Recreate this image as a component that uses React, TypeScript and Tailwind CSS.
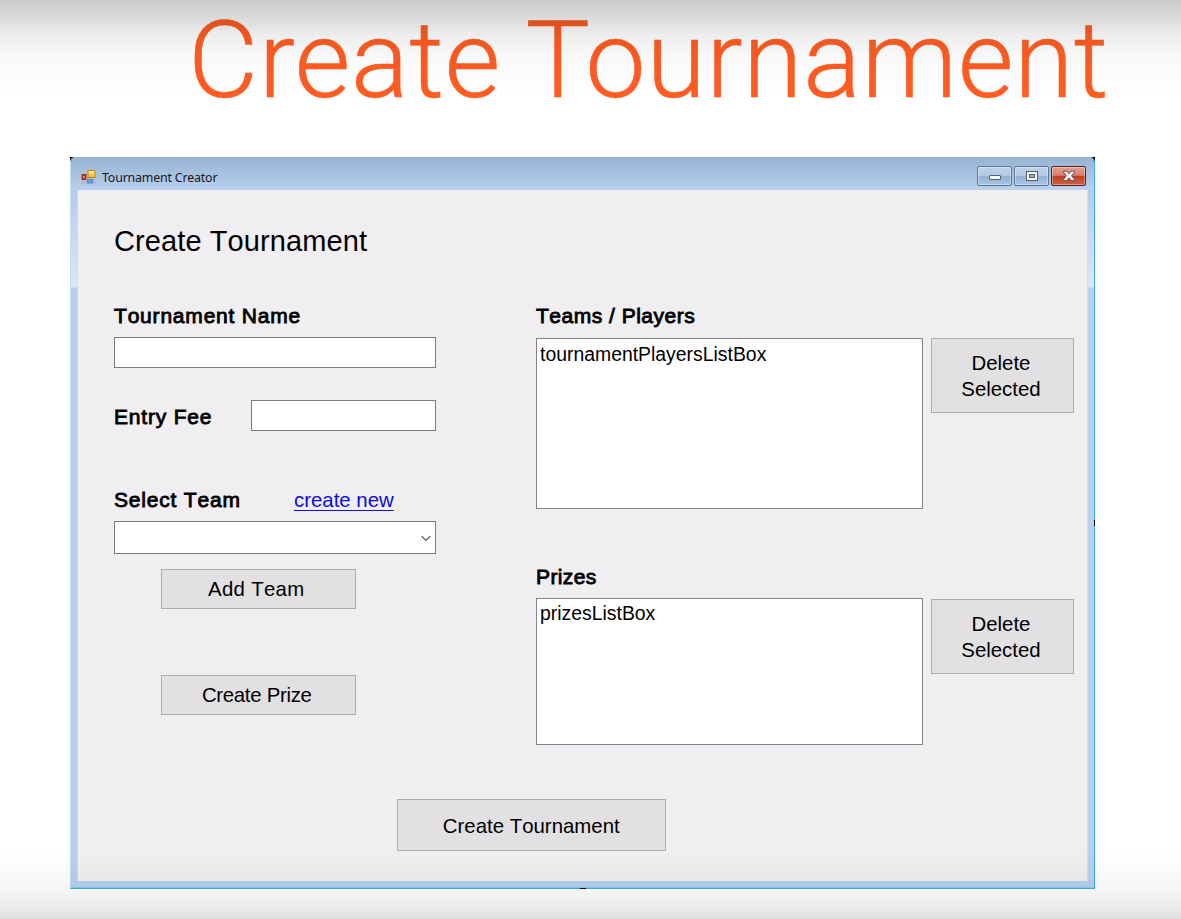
import type { ReactNode } from "react";

function FormIcon() {
  return (
    <svg width="16" height="16" viewBox="0 0 16 16">
      <defs>
        <linearGradient id="gold" x1="0" y1="0" x2="0" y2="1">
          <stop offset="0" stopColor="#fff0a0" />
          <stop offset="1" stopColor="#f0b010" />
        </linearGradient>
      </defs>
      <rect x="0" y="1" width="15" height="14" fill="#b4bfd0" />
      <rect x="1" y="5.5" width="4" height="5" fill="#b5331d" stroke="#8c2415" strokeWidth="0.8" />
      <rect x="2.3" y="7" width="1.2" height="2" fill="#ffb49c" />
      <rect x="7" y="1.5" width="7" height="7" fill="url(#gold)" stroke="#c08a12" />
      <rect x="6.5" y="10.5" width="5" height="3.5" fill="#6d9df0" stroke="#4b7ad0" strokeWidth="0.8" />
    </svg>
  );
}

const glass =
  "border-[#5d7592] bg-[linear-gradient(180deg,#bfd2ea_0%,#b2c9e5_48%,#94b1d4_52%,#a9c4e4_100%)]";
const red =
  "border-[#5b1f22] bg-[linear-gradient(180deg,#e3a293_0%,#d9806c_46%,#bd3f23_52%,#cf6045_100%)]";

function CaptionButton({ tone, label, children }: { tone: string; label: string; children: ReactNode }) {
  return (
    <button
      aria-label={label}
      className={`flex h-5 w-[35px] items-center justify-center rounded-[2px] border shadow-[inset_0_0_0_1px_rgba(255,255,255,0.35)] ${tone}`}
    >
      {children}
    </button>
  );
}

function TitleBar() {
  return (
    <header className="flex h-[33px] shrink-0 items-start bg-[linear-gradient(180deg,#98b4d3_0%,#a7c1e0_50%,#bad1ef_100%)] pl-[10px] pr-2">
      <div className="mt-3">
        <FormIcon />
      </div>
      <span className="ml-[5px] mt-[11px] font-['Noto_Sans',sans-serif] text-[12.4px] leading-[19px] tracking-[-0.18px] text-[#16181d]">
        Tournament Creator
      </span>
      <div className="ml-auto mt-[9px] flex gap-[2px]">
        <CaptionButton tone={glass} label="Minimize">
          <svg width="14" height="12" viewBox="0 0 14 12">
            <rect x="1.5" y="5.5" width="11" height="4" rx="0.5" fill="#f5f5f5" stroke="#56606e" />
          </svg>
        </CaptionButton>
        <CaptionButton tone={glass} label="Maximize">
          <svg width="14" height="12" viewBox="0 0 14 12">
            <rect x="1.5" y="1.5" width="11" height="9" fill="#f5f5f5" stroke="#56606e" />
            <rect x="4.5" y="4.5" width="5" height="3" fill="#8faccc" stroke="#56606e" />
          </svg>
        </CaptionButton>
        <CaptionButton tone={red} label="Close">
          <svg width="14" height="12" viewBox="0 0 14 12">
            <path
              d="M1.5 1.2h3.4L7 3.7 9.1 1.2h3.4v.9L9.6 5.8l2.9 3.7v.9H9.1L7 7.9l-2.1 2.5H1.5v-.9l2.9-3.7-2.9-3.7z"
              fill="#fafafa"
              stroke="#5c4650"
              strokeWidth="0.9"
            />
          </svg>
        </CaptionButton>
      </div>
    </header>
  );
}

function Label({ spacing = "tracking-[0.8px]", children }: { spacing?: string; children: ReactNode }) {
  return (
    <label
      className={`block whitespace-nowrap text-[21px] leading-6 [-webkit-text-stroke:0.85px_#000] ${spacing}`}
    >
      {children}
    </label>
  );
}

function PushButton({ className, children }: { className: string; children: ReactNode }) {
  return (
    <button
      className={`flex items-center justify-center border border-[#adadad] bg-[#e2e0e2] text-center text-[20.4px] leading-[26px] ${className}`}
    >
      {children}
    </button>
  );
}

interface ListSectionProps {
  title: string;
  item: string;
  box: string;
  className: string;
  spacing: string;
}

function ListSection({ title, item, box, className, spacing }: ListSectionProps) {
  return (
    <section className={className}>
      <Label spacing={spacing}>{title}</Label>
      <div className="flex items-start gap-2">
        <div className={`w-[387px] border border-[#82858c] bg-white pl-[3px] text-[19.4px] leading-6 ${box}`}>
          {item}
        </div>
        <PushButton className="mt-[10px] h-[75px] w-[143px] pr-[3px]">
          Delete
          <br />
          Selected
        </PushButton>
      </div>
    </section>
  );
}

function SideEdge({ className }: { className: string }) {
  return (
    <div
      className={`shrink-0 bg-[linear-gradient(180deg,#b3cceb_0px,#dbe8f8_97px,#b7d0ee_98px,#b7d0ee_100%)] ${className}`}
    />
  );
}

export default function App() {
  return (
    <main className="relative h-[919px] w-[1181px] overflow-hidden bg-white font-['Liberation_Sans',Arial,sans-serif] text-black">
      <h1 className="h-[157px] whitespace-nowrap pl-[188px] font-['Roboto',sans-serif] text-[108px] font-light leading-[120px] tracking-[0.5px] text-[#ff5c22] [-webkit-text-stroke:0.5px_#ff5c22]">
        Create Tournament
      </h1>

      <div className="relative ml-[70px] h-[732px] w-[1025px] bg-black">
        <div className="flex h-full flex-col overflow-hidden rounded-t-[5px] border-b border-l border-r border-[#3fb0de] border-l-[#c6dcf0]">
          <TitleBar />
          <div className="flex min-h-0 flex-1">
            <SideEdge className="w-[7px] border-r border-[#cbdcf2]" />
            <div className="flex-1 bg-[#f0eef1] pl-9 [font-kerning:none]">
              <h2 className="pt-[33px] text-[29px] leading-9 tracking-[0.1px]">Create Tournament</h2>
              <div className="flex pt-[45px]">
                <div className="w-[321.5px]">
                  <Label>Tournament Name</Label>
                  <input aria-label="Tournament Name" className="mt-[9px] block h-[31px] w-full border border-[#7a7a7a] bg-white" />
                  <div className="mt-8 flex justify-between">
                    <div className="pt-[5px]">
                      <Label>Entry Fee</Label>
                    </div>
                    <input aria-label="Entry Fee" className="h-[31px] w-[185px] border border-[#7a7a7a] bg-white" />
                  </div>
                  <div className="mt-[57px] flex">
                    <div className="w-[180px]">
                      <Label>Select Team</Label>
                    </div>
                    <a className="text-[20.4px] leading-6 text-[#0b0be6] underline decoration-1 underline-offset-[3px] [text-decoration-skip-ink:none]">
                      create new
                    </a>
                  </div>
                  <div className="mt-[9px] flex h-[33px] items-center justify-end border border-[#7a7a7a] bg-white pr-1 pt-px">
                    <svg width="10" height="7" viewBox="0 0 10 7" fill="none">
                      <path d="M0.7 1.2 5 5.4 9.3 1.2" stroke="#606060" strokeWidth="1.2" />
                    </svg>
                  </div>
                  <div className="flex flex-col gap-[66px] pl-[47px] pt-[15px]">
                    <PushButton className="h-10 w-[194.5px] pr-1 tracking-[0.3px]">Add Team</PushButton>
                    <PushButton className="h-10 w-[194.5px] pr-[3px] tracking-[-0.3px]">Create Prize</PushButton>
                  </div>
                </div>
                <div className="pl-[100.5px]">
                  <ListSection
                    className="h-[260px]"
                    title="Teams / Players"
                    item="tournamentPlayersListBox"
                    box="mt-[10px] h-[171px] pt-[3px]"
                    spacing="tracking-[0.5px]"
                  />
                  <ListSection
                    className="h-[235px] pt-px"
                    title="Prizes"
                    item="prizesListBox"
                    box="mt-[9px] h-[147px] pt-[2px]"
                    spacing="tracking-[0.4px]"
                  />
                </div>
              </div>
              <PushButton className="ml-[282.5px] h-[52px] w-[269.5px] pt-px">Create Tournament</PushButton>
            </div>
            <SideEdge className="w-[7px] border-l border-[#cbdcf2]" />
          </div>
          <div className="h-[7px] shrink-0 border-b border-[#85cdec] bg-[#b7d0ee]" />
        </div>
        <div className="absolute right-0 top-[363px] h-[6px] w-px bg-black" />
        <div className="absolute bottom-0 left-[510px] h-px w-[6px] bg-black" />
      </div>

      <div className="pointer-events-none absolute inset-x-0 top-0 h-[100px] bg-[linear-gradient(180deg,rgba(0,0,0,0.21)_0%,rgba(0,0,0,0.14)_18%,rgba(0,0,0,0.065)_36%,rgba(0,0,0,0.02)_60%,transparent_100%)]" />
      <div className="pointer-events-none absolute inset-x-0 bottom-0 h-[70px] bg-[linear-gradient(0deg,rgba(0,0,0,0.13)_0%,rgba(0,0,0,0.06)_25%,rgba(0,0,0,0.03)_50%,transparent_100%)]" />
    </main>
  );
}
